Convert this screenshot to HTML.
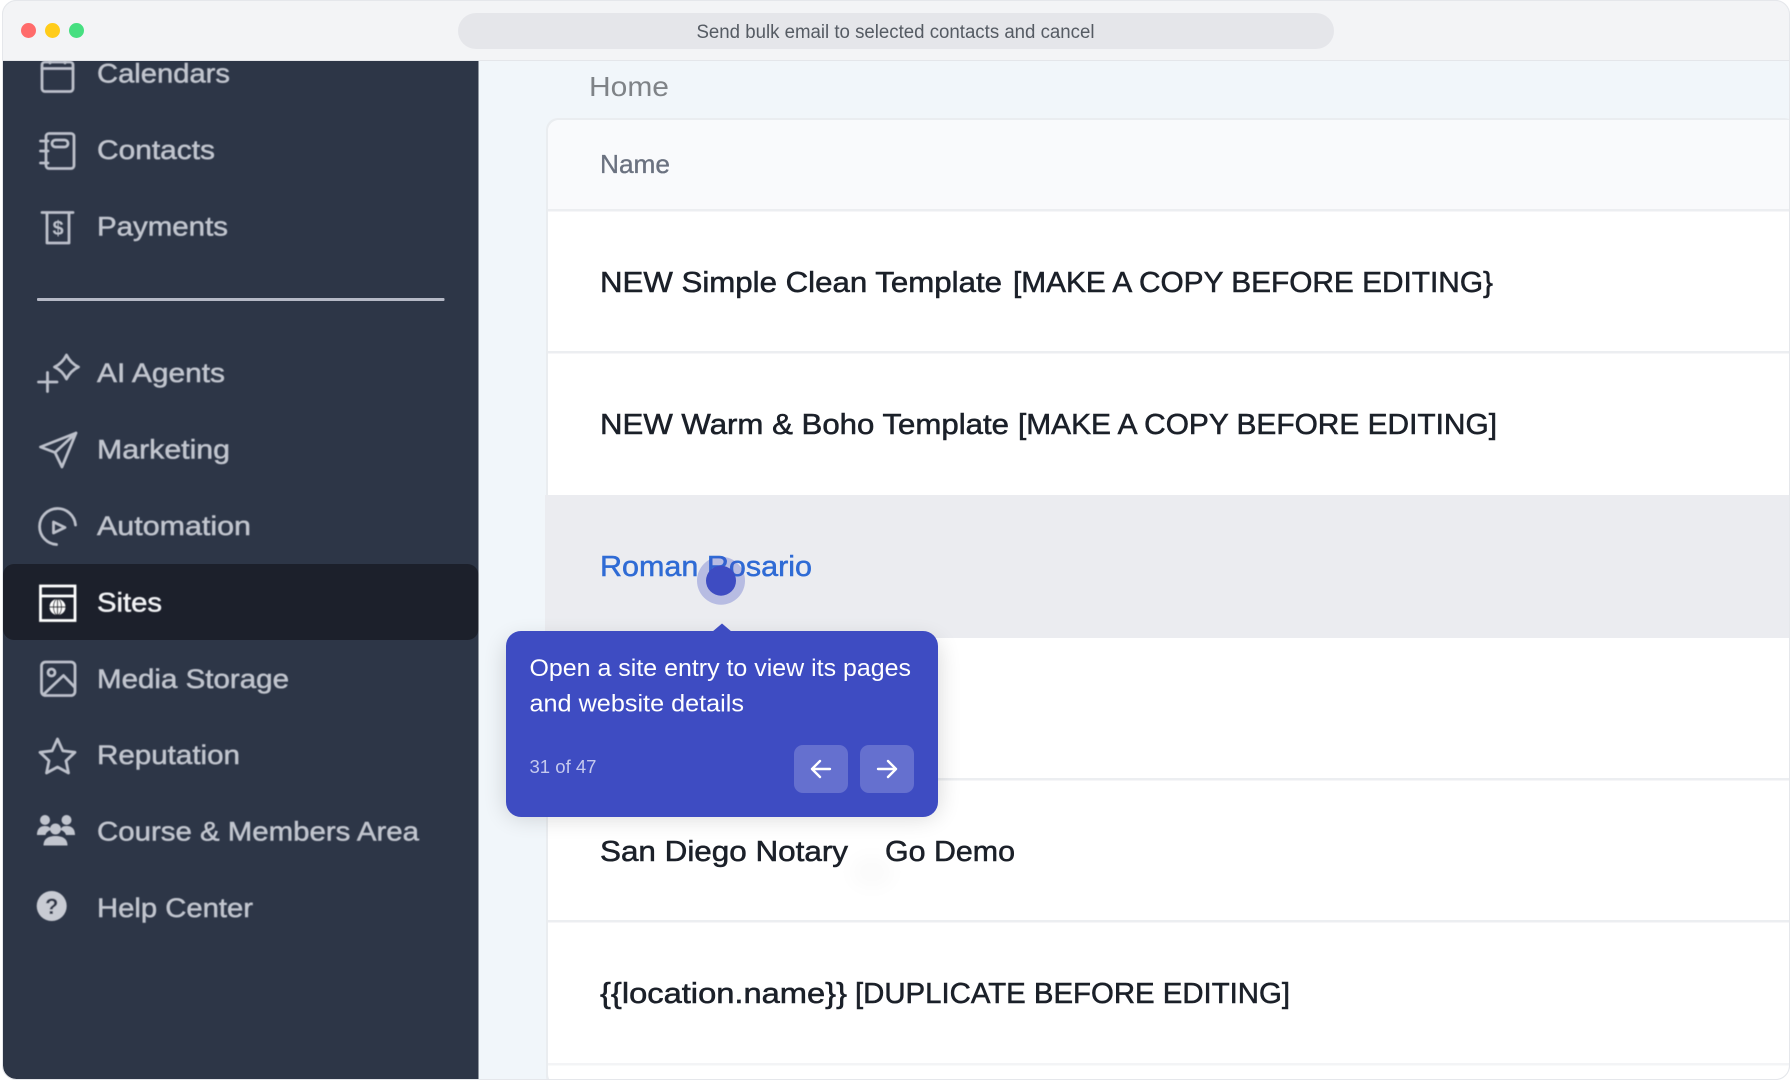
<!DOCTYPE html>
<html lang="en">
<head>
<meta charset="utf-8">
<title>Sites walkthrough</title>
<style>
html,body{margin:0;padding:0;width:1792px;height:1080px;overflow:hidden;background:#fff}
svg{display:block;position:absolute;left:0;top:0}
text{font-family:"Liberation Sans",sans-serif}
.nav{font-size:27px;fill:#c1c5ce;stroke:#c1c5ce;stroke-width:.5}
.row{font-size:29px;fill:#1b2029;stroke:#1b2029;stroke-width:.55}
.ic{fill:none;stroke:#bcc0ca;stroke-width:2.8;stroke-linejoin:round;stroke-linecap:round}
.tip{font-size:24.5px;fill:#fff}
.line{fill:#eceef1}
</style>
</head>
<body>
<svg width="1792" height="1080" viewBox="0 0 1792 1080" xmlns="http://www.w3.org/2000/svg">
<defs>
  <clipPath id="win"><rect x="3" y="1" width="1786" height="1078" rx="13"/></clipPath>
  <filter id="sh" x="-20%" y="-20%" width="140%" height="150%"><feGaussianBlur stdDeviation="12"/></filter>
  <filter id="sm" x="-50%" y="-50%" width="200%" height="200%"><feGaussianBlur stdDeviation="10"/></filter>
  <filter id="soft" x="-5%" y="-5%" width="110%" height="110%"><feGaussianBlur stdDeviation=".4"/></filter>
</defs>
<rect x="2.5" y=".5" width="1787" height="1079" rx="14" fill="#fff" stroke="#e5e7eb"/>
<g clip-path="url(#win)">
  <!-- main -->
  <rect x="478" y="60" width="1314" height="1020" fill="#f1f6fa"/>
  <!-- card -->
  <rect x="546" y="118" width="1250" height="970" rx="12" fill="#eaedf0"/>
  <rect x="548" y="120" width="1246" height="965" rx="11" fill="#fff"/>
  <path d="M548 210V131a11 11 0 0 1 11-11H1792V210Z" fill="#f9fafc"/>
  <rect x="548" y="209" width="1244" height="2.5" class="line"/>
  <rect x="548" y="351" width="1244" height="2.5" class="line"/>
  <rect x="545" y="495" width="1247" height="143" fill="#ebecf0"/>
  <rect x="548" y="778" width="1244" height="2.5" class="line"/>
  <rect x="548" y="920" width="1244" height="2.5" class="line"/>
  <rect x="548" y="1063" width="1244" height="2.5" fill="#f3f4f6"/>
  <text x="589" y="96" font-size="28" fill="#7f8387" textLength="80" lengthAdjust="spacingAndGlyphs">Home</text>
  <text x="600" y="173" font-size="26" fill="#6b7280" stroke="#6b7280" stroke-width=".35" textLength="70" lengthAdjust="spacingAndGlyphs">Name</text>
  <text class="row" x="600" y="292" textLength="402" lengthAdjust="spacingAndGlyphs">NEW Simple Clean Template</text>
  <text class="row" x="1013" y="292" textLength="480" lengthAdjust="spacingAndGlyphs">[MAKE A COPY BEFORE EDITING}</text>
  <text class="row" x="600" y="434" textLength="409" lengthAdjust="spacingAndGlyphs">NEW Warm &amp; Boho Template</text>
  <text class="row" x="1018" y="434" textLength="479" lengthAdjust="spacingAndGlyphs">[MAKE A COPY BEFORE EDITING]</text>
  <text x="600" y="576" font-size="29" fill="#2f6bd5" stroke="#2f6bd5" stroke-width=".5" textLength="212" lengthAdjust="spacingAndGlyphs">Roman Rosario</text>
  <text class="row" x="600" y="861" textLength="248" lengthAdjust="spacingAndGlyphs">San Diego Notary</text>
  <ellipse cx="872" cy="872" rx="22" ry="16" fill="#000" opacity=".02" filter="url(#sm)"/>
  <text class="row" x="885" y="861" textLength="130" lengthAdjust="spacingAndGlyphs">Go Demo</text>
  <text class="row" x="600" y="1003" textLength="247" lengthAdjust="spacingAndGlyphs">{{location.name}}</text>
  <text class="row" x="855" y="1003" textLength="435" lengthAdjust="spacingAndGlyphs">[DUPLICATE BEFORE EDITING]</text>

  <!-- sidebar -->
  <rect x="3" y="60" width="475.500" height="1020" fill="#2d3647"/>
  <rect x="3" y="564" width="475.500" height="76" rx="11" fill="#1c202b"/>
  <rect x="37" y="298" width="407.500" height="3" rx="1" fill="#b5b9c6"/>

  <g filter="url(#soft)">
  <!-- calendar -->
  <g class="ic"><rect x="42" y="62" width="31" height="29.500" rx="3"/><path d="M42 68.500H73M50 58V63M65 58V63"/></g>
  <!-- contacts -->
  <g class="ic"><rect x="46" y="133.500" width="28" height="35" rx="3"/><rect x="52" y="140" width="16" height="7" rx="3.500"/><path d="M40.500 141H48M40.500 151H48M40.500 163H48"/></g>
  <!-- payments -->
  <g class="ic"><path d="M42 212.500H73M47 212.500V243H69V212.500"/></g>
  <text x="58" y="235" text-anchor="middle" font-size="20" font-weight="700" fill="#bcc0ca">$</text>
  <!-- AI -->
  <g class="ic"><path d="M66.500 355C69 360 73 364.500 78.500 367 73 369.500 69 374 66.500 379 64 374 60 369.500 54.500 367 60 364.500 64 360 66.500 355Z"/><path d="M47.500 372.500V391.500M38.500 382H57"/></g>
  <!-- marketing -->
  <g class="ic"><path d="M76 433L40.500 447 55 452.500 62 467ZM76 433L55 452.500"/></g>
  <!-- automation -->
  <g class="ic"><path d="M75.500 525A18 18 0 1 0 56.500 544.500"/><path d="M53.500 522V533L65 527.500Z"/></g>
  <!-- sites -->
  <g fill="none" stroke="#fff" stroke-width="2.800"><rect x="40.500" y="586" width="34.500" height="34.500"/><path d="M40.500 596H75"/></g>
  <circle cx="57.500" cy="607" r="8" fill="#fff"/>
  <path d="M49.500 607H65.500M57.500 599V615" fill="none" stroke="#1c202b" stroke-width="1.200"/>
  <ellipse cx="57.500" cy="607" rx="4" ry="8" fill="none" stroke="#1c202b" stroke-width="1"/>
  <!-- media -->
  <g class="ic"><rect x="41.500" y="662" width="33.500" height="33.500" rx="4"/><circle cx="51.500" cy="672.500" r="3.500"/><path d="M44 694L63.500 675.500 74.500 687"/></g>
  <!-- reputation -->
  <path class="ic" d="M57.500 739L62.800 750.800 75 752.300 66 760.800 68.500 773 57.500 767 46.500 773 49 760.800 40 752.300 52.200 750.800Z"/>
  <!-- group -->
  <g fill="#c1c5ce"><circle cx="45" cy="820" r="5"/><circle cx="66.500" cy="820" r="5"/><path d="M37 835C37 828 41 826 45 826S50 827.500 51 830C47.500 831 46 833 45.500 835ZM75 835C75 828 71 826 66.500 826S61.500 827.500 60.500 830C64 831 65.500 833 66 835Z"/><circle cx="55.500" cy="829" r="5.500"/><path d="M43.500 845.500C43.500 839 48 836 55.500 836S67.500 839 67.500 845.500Z"/></g>
  <!-- help -->
  <circle cx="51.700" cy="906" r="15" fill="#c8cbd3"/>
  <text x="51.700" y="914" text-anchor="middle" font-size="22" font-weight="700" fill="#2d3647">?</text>

  <text class="nav" x="97" y="82.500" textLength="133" lengthAdjust="spacingAndGlyphs">Calendars</text>
  <text class="nav" x="97" y="159" textLength="118" lengthAdjust="spacingAndGlyphs">Contacts</text>
  <text class="nav" x="97" y="235.500" textLength="131" lengthAdjust="spacingAndGlyphs">Payments</text>
  <text class="nav" x="97" y="382" textLength="128" lengthAdjust="spacingAndGlyphs">AI Agents</text>
  <text class="nav" x="97" y="458.500" textLength="133" lengthAdjust="spacingAndGlyphs">Marketing</text>
  <text class="nav" x="97" y="535" textLength="154" lengthAdjust="spacingAndGlyphs">Automation</text>
  <text x="97" y="611.500" font-size="27" fill="#f2f3f5" stroke="#f2f3f5" stroke-width=".5" textLength="65" lengthAdjust="spacingAndGlyphs">Sites</text>
  <text class="nav" x="97" y="688" textLength="192" lengthAdjust="spacingAndGlyphs">Media Storage</text>
  <text class="nav" x="97" y="764" textLength="143" lengthAdjust="spacingAndGlyphs">Reputation</text>
  <text class="nav" x="97" y="840.500" textLength="322" lengthAdjust="spacingAndGlyphs">Course &amp; Members Area</text>
  <text class="nav" x="97" y="917" textLength="156" lengthAdjust="spacingAndGlyphs">Help Center</text>
  </g>

  <!-- title bar -->
  <rect x="0" y="0" width="1792" height="60" fill="#f3f4f6"/>
  <rect x="0" y="60" width="1792" height="1" fill="#e4e6ea"/>
  <circle cx="28.500" cy="30.500" r="7.500" fill="#ff6b6b"/>
  <circle cx="52.500" cy="30.500" r="7.500" fill="#ffcc1a"/>
  <circle cx="76.500" cy="30.500" r="7.500" fill="#46df80"/>
  <rect x="458" y="13" width="876" height="36" rx="18" fill="#e5e6ea"/>
  <text x="696.500" y="38" font-size="19" fill="#555b63" textLength="398" lengthAdjust="spacingAndGlyphs">Send bulk email to selected contacts and cancel</text>
</g>
<rect x="2.500" y=".5" width="1787" height="1079" rx="14" fill="none" stroke="#e5e7eb"/>

<!-- beacon -->
<circle cx="721" cy="580.700" r="24" fill="#3e4cc2" opacity=".3"/>
<circle cx="721" cy="580.700" r="15" fill="#3e4cc2"/>
<!-- tooltip -->
<rect x="506" y="640" width="432" height="177" rx="14" fill="#000" opacity=".16" filter="url(#sh)"/>
<path d="M712 632L722 623.500 732 632Z" fill="#3e4cc2"/>
<rect x="506" y="631" width="432" height="186" rx="15" fill="#3e4cc2"/>
<text class="tip" x="529.500" y="676" textLength="381.500" lengthAdjust="spacingAndGlyphs">Open a site entry to view its pages</text>
<text class="tip" x="529.500" y="711.500" textLength="214.500" lengthAdjust="spacingAndGlyphs">and website details</text>
<text x="529.500" y="773" font-size="18.500" fill="#c5c9ee" textLength="67" lengthAdjust="spacingAndGlyphs">31 of 47</text>
<rect x="794" y="745" width="54" height="48" rx="9" fill="#6570cf"/>
<rect x="860" y="745" width="54" height="48" rx="9" fill="#6570cf"/>
<path d="M830 769H812M820 761L812 769 820 777" fill="none" stroke="#fff" stroke-width="2.400" stroke-linecap="round" stroke-linejoin="round"/>
<path d="M878 769H896M888 761L896 769 888 777" fill="none" stroke="#fff" stroke-width="2.400" stroke-linecap="round" stroke-linejoin="round"/>
</svg>
</body>
</html>
